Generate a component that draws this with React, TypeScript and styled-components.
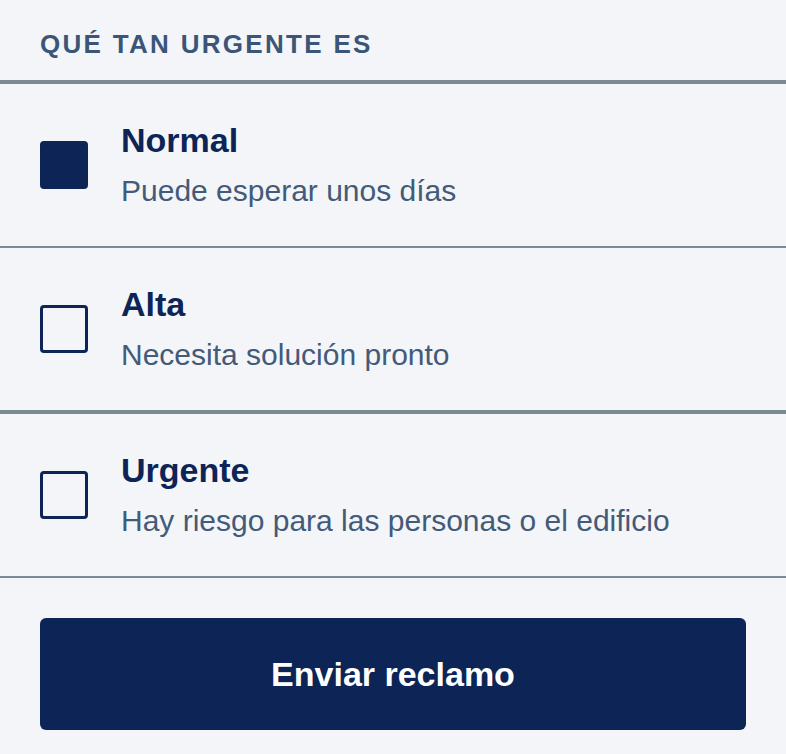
import React, { FC, useState } from 'react';
import styled, { createGlobalStyle } from 'styled-components';

const GlobalStyle = createGlobalStyle`
  html, body {
    margin: 0;
    padding: 0;
    background: #f3f5f8;
    font-family: 'Liberation Sans', Arial, sans-serif;
  }
`;

interface Level {
  id: string;
  title: string;
  hint: string;
  heavy?: boolean;
}

const levels: Level[] = [
  { id: 'normal', title: 'Normal', hint: 'Puede esperar unos días' },
  { id: 'alta', title: 'Alta', hint: 'Necesita solución pronto', heavy: true },
  { id: 'urgente', title: 'Urgente', hint: 'Hay riesgo para las personas o el edificio' }
];

const Panel = styled.div`
  width: 786px;
  min-height: 754px;
  background: #f3f5f8;
`;

const Heading = styled.h2`
  margin: 0;
  padding: 29px 40px 21px;
  font-size: 26px;
  line-height: 30px;
  font-weight: 700;
  letter-spacing: 2.3px;
  text-transform: uppercase;
  color: #3b5578;
  border-bottom: 4px solid #798a92;
`;

const Row = styled.label<{ $heavy?: boolean }>`
  display: flex;
  align-items: center;
  gap: 33px;
  height: 162px;
  padding: 0 40px;
  border-bottom: ${(p) => (p.$heavy ? '4px' : '2px')} solid #798a92;
  cursor: pointer;
`;

const Box = styled.span<{ $checked: boolean }>`
  flex: none;
  width: 48px;
  height: 48px;
  box-sizing: border-box;
  border-radius: 4px;
  border: 3.5px solid #0c2456;
  background: ${(p) => (p.$checked ? '#0c2456' : 'transparent')};
`;

const Texts = styled.span`
  display: flex;
  flex-direction: column;
  gap: 13px;
  padding-bottom: 2px;
`;

const Title = styled.span`
  font-size: 34px;
  line-height: 40px;
  font-weight: 700;
  color: #0c2456;
`;

const Hint = styled.span`
  font-size: 30px;
  line-height: 36px;
  color: #435a78;
`;

const Footer = styled.div`
  padding: 40px 40px 24px;
`;

const Submit = styled.button`
  display: block;
  width: 100%;
  height: 112px;
  border: none;
  border-radius: 6px;
  background: #0c2456;
  color: #ffffff;
  font-family: 'Liberation Sans', Arial, sans-serif;
  font-size: 34px;
  font-weight: 700;
  cursor: pointer;
`;

const App: FC = () => {
  const [selected, setSelected] = useState('normal');

  return (
    <Panel>
      <GlobalStyle />
      <Heading>Qué tan urgente es</Heading>
      {levels.map((level) => (
        <Row
          $heavy={level.heavy}
          key={level.id}
          onClick={() => setSelected(level.id)}
        >
          <Box $checked={selected === level.id} />
          <Texts>
            <Title>{level.title}</Title>
            <Hint>{level.hint}</Hint>
          </Texts>
        </Row>
      ))}
      <Footer>
        <Submit type='button'>Enviar reclamo</Submit>
      </Footer>
    </Panel>
  );
};

export default App;
